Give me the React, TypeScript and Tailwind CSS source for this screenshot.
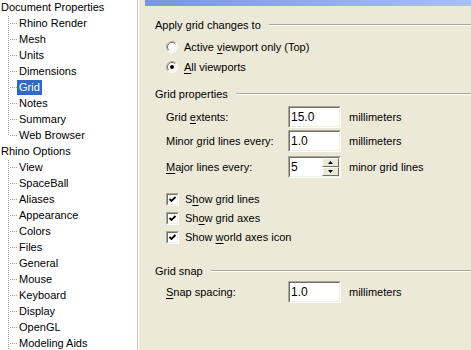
import React from "react"

const docItems = ["Rhino Render", "Mesh", "Units", "Dimensions", "Grid", "Notes", "Summary", "Web Browser"]
const rhinoItems = [
  "View",
  "SpaceBall",
  "Aliases",
  "Appearance",
  "Colors",
  "Files",
  "General",
  "Mouse",
  "Keyboard",
  "Display",
  "OpenGL",
  "Modeling Aids",
]

// label with an underlined access key
function Mn({ text, at }: { text: string; at: number }) {
  return (
    <span>
      {text.slice(0, at)}
      <span className="underline underline-offset-[2px]">{text[at]}</span>
      {text.slice(at + 1)}
    </span>
  )
}

function Connector({ last }: { last: boolean }) {
  return (
    <svg width="17" height="16" className="shrink-0">
      <line x1="8.5" y1="0" x2="8.5" y2={last ? 8 : 16} stroke="#a0a0a0" strokeDasharray="1 1" />
      <line x1="10" y1="7.5" x2="17" y2="7.5" stroke="#a0a0a0" strokeDasharray="1 1" />
    </svg>
  )
}

function TreeChild({ label, last, selected }: { label: string; last: boolean; selected?: boolean }) {
  return (
    <div className="flex h-4 items-start">
      <Connector last={last} />
      <span
        className={`h-[15px] px-[2px] leading-[15px] whitespace-nowrap ${
          selected ? "bg-[#316ac5] text-white" : "text-black"
        }`}
      >
        {label}
      </span>
    </div>
  )
}

function GroupHeading({ title }: { title: string }) {
  return (
    <div className="flex h-[14px] items-center">
      <span className="whitespace-nowrap leading-[14px]">{title}</span>
      <div className="ml-[8px] flex-1">
        <div className="h-px bg-[#aca899]" />
        <div className="h-px bg-white" />
      </div>
    </div>
  )
}

function Radio({ checked }: { checked?: boolean }) {
  return (
    <svg width="12" height="12" className="shrink-0">
      <circle cx="6" cy="6" r="5.5" fill="#fff" />
      <path d="M2.1 9.9 A5.5 5.5 0 0 1 9.9 2.1" fill="none" stroke="#aca899" />
      <path d="M9.9 2.1 A5.5 5.5 0 0 1 2.1 9.9" fill="none" stroke="#fff" />
      <path d="M2.8 9.2 A4.5 4.5 0 0 1 9.2 2.8" fill="none" stroke="#716f64" />
      <path d="M9.2 2.8 A4.5 4.5 0 0 1 2.8 9.2" fill="none" stroke="#f1efe2" />
      {checked && <circle cx="6" cy="6" r="2" fill="#000" />}
    </svg>
  )
}

function Check() {
  return (
    <div className="h-[13px] w-[13px] shrink-0 border border-t-[#aca899] border-l-[#aca899] border-r-white border-b-white">
      <div className="h-full w-full border border-t-[#716f64] border-l-[#716f64] border-r-[#f1efe2] border-b-[#f1efe2] bg-white">
        <svg width="9" height="9" className="block">
          <polyline points="1.5,4 3.5,6 7.5,2" fill="none" stroke="#000" strokeWidth="1.8" />
        </svg>
      </div>
    </div>
  )
}

function Sunken({ children, className }: { children: React.ReactNode; className?: string }) {
  return (
    <div
      className={`h-[22px] w-[53px] shrink-0 border border-t-[#aca899] border-l-[#aca899] border-r-white border-b-white ${
        className ?? ""
      }`}
    >
      <div className="flex h-full w-full border border-t-[#716f64] border-l-[#716f64] border-r-[#f1efe2] border-b-[#f1efe2] bg-white">
        {children}
      </div>
    </div>
  )
}

function SpinButton({ up }: { up?: boolean }) {
  return (
    <div className="flex h-[9px] w-[17px] items-center justify-center border border-t-white border-l-white border-r-[#716f64] border-b-[#716f64] bg-[#ece9d8]">
      <svg width="5" height="3">
        <polygon points={up ? "2.5,0 5,3 0,3" : "0,0 5,0 2.5,3"} fill="#000" />
      </svg>
    </div>
  )
}

function FieldRow({
  label,
  value,
  unit,
  spin,
  className,
}: {
  label: React.ReactNode
  value: string
  unit: string
  spin?: boolean
  className?: string
}) {
  return (
    <div className={`ml-[11px] flex h-[22px] items-center ${className ?? ""}`}>
      <div className="w-[122px] shrink-0 whitespace-nowrap">{label}</div>
      <Sunken>
        <span className="flex-1 pl-[1px] text-[12px] leading-[18px]">{value}</span>
        {spin && (
          <div className="flex flex-col">
            <SpinButton up />
            <SpinButton />
          </div>
        )}
      </Sunken>
      <span className="ml-[8px] whitespace-nowrap">{unit}</span>
    </div>
  )
}

function CheckRow({ label }: { label: React.ReactNode }) {
  return (
    <div className="ml-[11px] flex h-[19px] items-center gap-[6px]">
      <Check />
      <span className="whitespace-nowrap">{label}</span>
    </div>
  )
}

export default function App() {
  return (
    <div className="flex h-[350px] w-[471px] overflow-hidden font-['Liberation_Sans',Arial,sans-serif] text-[11px] text-black">
      {/* options tree */}
      <div className="w-[138px] shrink-0 border-r border-[#c9c7ba] bg-white">
        <div className="h-4 pl-[1px] leading-[15px] whitespace-nowrap">Document Properties</div>
        {docItems.map((item, i) => (
          <TreeChild key={item} label={item} last={i === docItems.length - 1} selected={item === "Grid"} />
        ))}
        <div className="h-4 pl-[1px] leading-[15px] whitespace-nowrap">Rhino Options</div>
        {rhinoItems.map((item) => (
          <TreeChild key={item} label={item} last={false} />
        ))}
      </div>

      {/* grid page */}
      <div className="flex-1 border-l border-white bg-[#ece9d8] pl-[6px]">
        <div className="h-[6px] bg-gradient-to-r from-[#7896de] to-[#a9c0f2]" />
        <div className="pl-[10px]">
          <div className="mt-[12px]">
            <GroupHeading title="Apply grid changes to" />
          </div>
          <div className="mt-[5px] ml-[11px] flex h-[20px] items-center gap-[6px]">
            <Radio />
            <span className="whitespace-nowrap">
              Active <Mn text="viewport" at={0} /> only (Top)
            </span>
          </div>
          <div className="ml-[11px] flex h-[20px] items-center gap-[6px]">
            <Radio checked />
            <Mn text="All viewports" at={0} />
          </div>

          <div className="mt-[10px]">
            <GroupHeading title="Grid properties" />
          </div>
          <FieldRow className="mt-[5px]" label={<Mn text="Grid extents:" at={5} />} value="15.0" unit="millimeters" />
          <FieldRow
            className="mt-[2px]"
            label={<Mn text="Minor grid lines every:" at={6} />}
            value="1.0"
            unit="millimeters"
          />
          <FieldRow
            className="mt-[4px]"
            label={<Mn text="Major lines every:" at={0} />}
            value="5"
            unit="minor grid lines"
            spin
          />

          <div className="mt-[12px]">
            <CheckRow label={<Mn text="Show grid lines" at={1} />} />
            <CheckRow label={<Mn text="Show grid axes" at={2} />} />
            <CheckRow label={<Mn text="Show world axes icon" at={5} />} />
          </div>

          <div className="mt-[17px]">
            <GroupHeading title="Grid snap" />
          </div>
          <FieldRow className="mt-[3px]" label={<Mn text="Snap spacing:" at={0} />} value="1.0" unit="millimeters" />
        </div>
      </div>
    </div>
  )
}
